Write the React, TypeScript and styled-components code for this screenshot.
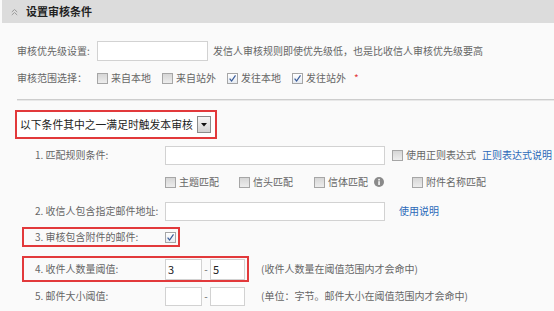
import React from "react";
import styled, { createGlobalStyle } from "styled-components";

const Global = createGlobalStyle`
  html, body { margin: 0; padding: 0; background: #fafafa; }
  body {
    font-family: "Noto Sans CJK SC", "Microsoft YaHei", sans-serif;
    font-size: 10px;
    color: #666;
  }
  * { box-sizing: border-box; }
`;

const RED = "#e2393b";

const Page = styled.div`
  width: 554px;
  height: 311px;
  overflow: hidden;
  background: #fafafa;
`;

const Header = styled.div`
  height: 23px;
  margin-left: 2px;
  background: #dcdcdc;
  display: flex;
  align-items: center;
  padding-left: 9px;
  gap: 8px;
`;

const Title = styled.span`
  font-size: 11px;
  font-weight: bold;
  color: #222;
  line-height: 1;
`;

const TopForm = styled.div`
  padding-left: 17px;
  display: flex;
  flex-direction: column;
`;

const FieldRow = styled.div<{ $mt: number; $h: number }>`
  display: flex;
  align-items: center;
  margin-top: ${(p) => p.$mt}px;
  height: ${(p) => p.$h}px;
  line-height: 1;
  white-space: nowrap;
`;

const FieldLabel = styled.span<{ $w: number }>`
  width: ${(p) => p.$w}px;
  flex: none;
  color: #666;
`;

const TextInput = styled.input<{ $w: number; $h: number }>`
  width: ${(p) => p.$w}px;
  height: ${(p) => p.$h}px;
  flex: none;
  border: 1px solid #d2d2d2;
  background: #fff;
  padding: 0 2px;
  margin: 0;
  font-family: inherit;
  font-size: 11px;
  color: #222;
  outline: none;
`;

const Hint = styled.span<{ $ml: number }>`
  margin-left: ${(p) => p.$ml}px;
  color: #666;
`;

const CheckItem = styled.label<{ $mr: number }>`
  display: flex;
  align-items: center;
  gap: 3px;
  margin-right: ${(p) => p.$mr}px;
  color: #666;
`;

const Box = styled.span<{ $on: boolean }>`
  width: 11px;
  height: 11px;
  flex: none;
  border: 1px solid #a6a6a6;
  background: ${(p) =>
    p.$on
      ? "linear-gradient(#ffffff, #e6ebf2)"
      : "linear-gradient(#d6d6d6, #ededed)"};
  display: flex;
  align-items: center;
  justify-content: center;
`;

const Star = styled.span`
  color: ${RED};
  margin-left: 8px;
  font-size: 10px;
`;

const Divider = styled.div`
  margin: 11px 0 0 17px;
  height: 2px;
  border-top: 1px solid #cdcdcd;
  border-bottom: 1px solid #e8e8e8;
`;

const SelectFrame = styled.div`
  margin: 9px 0 0 15px;
  width: 202px;
  height: 29px;
  border: 2px solid ${RED};
  background: #fff;
  display: flex;
  align-items: center;
  justify-content: space-between;
  padding: 0 4px 0 3px;
`;

const SelectText = styled.span`
  font-size: 10.8px;
  color: #222;
  line-height: 1;
  white-space: nowrap;
`;

const DropButton = styled.span`
  width: 14px;
  height: 17px;
  border: 1px solid #8c8c8c;
  background: linear-gradient(#f6f6f6, #d2d2d2);
  display: flex;
  align-items: center;
  justify-content: center;
`;

const CondList = styled.div`
  padding-left: 22px;
  display: flex;
  flex-direction: column;
`;

const CondRow = styled.div<{ $mt: number; $h: number; $indent?: number }>`
  display: flex;
  align-items: center;
  margin-top: ${(p) => p.$mt}px;
  height: ${(p) => p.$h}px;
  padding-left: ${(p) => p.$indent ?? 0}px;
  line-height: 1;
  white-space: nowrap;
`;

const Frame = styled.div<{ $hl?: boolean }>`
  display: flex;
  align-items: center;
  height: 100%;
  border: 2px solid ${(p) => (p.$hl ? RED : "transparent")};
  padding: 0 2px 0 11px;
`;

const Dash = styled.span`
  width: 8px;
  text-align: center;
  color: #666;
  flex: none;
`;

const Link = styled.a<{ $ml: number }>`
  margin-left: ${(p) => p.$ml}px;
  color: #2a68b8;
  text-decoration: none;
  cursor: pointer;
`;

const Info = styled.span`
  display: flex;
  margin: 0 28px 0 -14px;
`;

function Check({ on }: { on?: boolean }) {
  return (
    <Box $on={!!on}>
      {on && (
        <svg width="9" height="9" viewBox="0 0 9 9">
          <path d="M1.6 4.7 L3.6 7 L7.5 1.3" fill="none" stroke="#3a5c99" strokeWidth="1.2" />
        </svg>
      )}
    </Box>
  );
}

function CollapseIcon() {
  return (
    <svg width="7" height="8" viewBox="0 0 7 8">
      <path d="M0.8 4 L3.5 1.5 L6.2 4 M0.8 7 L3.5 4.5 L6.2 7" fill="none" stroke="#9a9a9a" strokeWidth="1" />
    </svg>
  );
}

export default function App() {
  return (
    <Page>
      <Global />
      <Header>
        <CollapseIcon />
        <Title>设置审核条件</Title>
      </Header>

      <TopForm>
        <FieldRow $mt={18} $h={20}>
          <FieldLabel $w={80}>审核优先级设置:</FieldLabel>
          <TextInput $w={111} $h={20} />
          <Hint $ml={5}>发信人审核规则即使优先级低，也是比收信人审核优先级要高</Hint>
        </FieldRow>
        <FieldRow $mt={7} $h={20}>
          <FieldLabel $w={80}>审核范围选择：</FieldLabel>
          <CheckItem $mr={11}>
            <Check />
            来自本地
          </CheckItem>
          <CheckItem $mr={11}>
            <Check />
            来自站外
          </CheckItem>
          <CheckItem $mr={11}>
            <Check on />
            发往本地
          </CheckItem>
          <CheckItem $mr={0}>
            <Check on />
            发往站外
          </CheckItem>
          <Star>*</Star>
        </FieldRow>
      </TopForm>

      <Divider />

      <SelectFrame>
        <SelectText>以下条件其中之一满足时触发本审核</SelectText>
        <DropButton>
          <svg width="6" height="4" viewBox="0 0 6 4">
            <path d="M0 0 H6 L3 3.5 Z" fill="#111" />
          </svg>
        </DropButton>
      </SelectFrame>

      <CondList>
        <CondRow $mt={6} $h={20}>
          <Frame>
            <FieldLabel $w={130}>1. 匹配规则条件:</FieldLabel>
            <TextInput $w={220} $h={19} />
          </Frame>
          <CheckItem $mr={0} style={{ marginLeft: 3 }}>
            <Check />
            使用正则表达式
          </CheckItem>
          <Link $ml={6}>正则表达式说明</Link>
        </CondRow>

        <CondRow $mt={7} $h={20} $indent={143}>
          <CheckItem $mr={20}>
            <Check />
            主题匹配
          </CheckItem>
          <CheckItem $mr={21}>
            <Check />
            信头匹配
          </CheckItem>
          <CheckItem $mr={20}>
            <Check />
            信体匹配
          </CheckItem>
          <Info>
            <svg width="10" height="10" viewBox="0 0 10 10">
              <circle cx="5" cy="5" r="5" fill="#8a8a8a" />
              <rect x="4.3" y="4.2" width="1.5" height="3.8" fill="#fff" />
              <circle cx="5.05" cy="2.7" r="0.85" fill="#fff" />
            </svg>
          </Info>
          <CheckItem $mr={0}>
            <Check />
            附件名称匹配
          </CheckItem>
        </CondRow>

        <CondRow $mt={9} $h={20}>
          <Frame>
            <FieldLabel $w={130}>2. 收信人包含指定邮件地址:</FieldLabel>
            <TextInput $w={220} $h={19} />
          </Frame>
          <Link $ml={10}>使用说明</Link>
        </CondRow>

        <CondRow $mt={6} $h={20}>
          <Frame $hl>
            <FieldLabel $w={130}>3. 审核包含附件的邮件:</FieldLabel>
            <Check on />
          </Frame>
        </CondRow>

        <CondRow $mt={9} $h={26}>
          <Frame $hl>
            <FieldLabel $w={130}>4. 收件人数量阈值:</FieldLabel>
            <TextInput $w={37} $h={21} defaultValue="3" />
            <Dash>-</Dash>
            <TextInput $w={35} $h={21} defaultValue="5" />
          </Frame>
          <Hint $ml={12}>(收件人数量在阈值范围内才会命中)</Hint>
        </CondRow>

        <CondRow $mt={4} $h={20}>
          <Frame>
            <FieldLabel $w={130}>5. 邮件大小阈值:</FieldLabel>
            <TextInput $w={37} $h={19} />
            <Dash>-</Dash>
            <TextInput $w={35} $h={19} />
          </Frame>
          <Hint $ml={12}>(单位：字节。邮件大小在阈值范围内才会命中)</Hint>
        </CondRow>
      </CondList>
    </Page>
  );
}
